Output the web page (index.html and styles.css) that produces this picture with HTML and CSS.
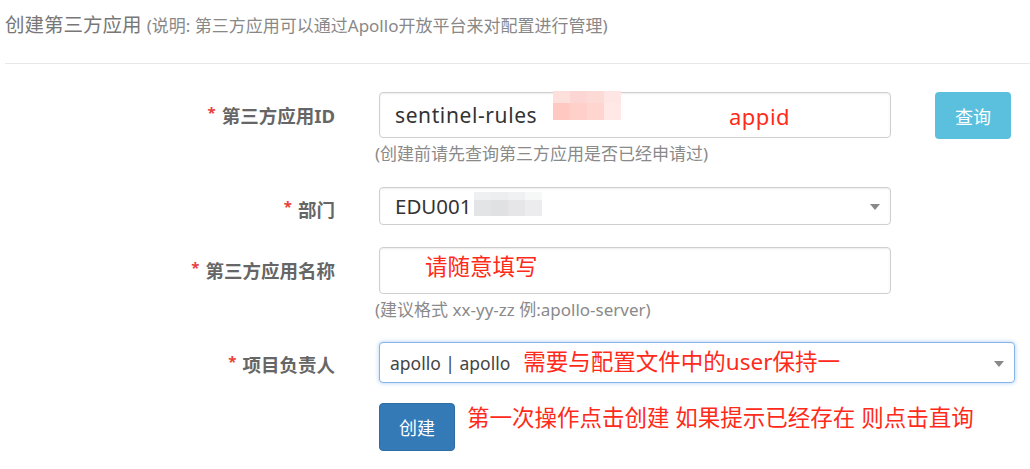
FILE: index.html
```html
<!DOCTYPE html>
<html lang="zh-CN">
<head>
<meta charset="utf-8">
<title>创建第三方应用</title>
<link rel="stylesheet" href="styles.css">
</head>
<body>
<div class="header">
  <span class="title">创建第三方应用</span>
  <span class="subtitle">(说明: 第三方应用可以通过Apollo开放平台来对配置进行管理)</span>
</div>
<div class="form">
  <div class="row row-id">
    <label class="label"><span class="req">*</span>第三方应用ID</label>
    <div class="field">
      <div class="control ctl-id">
        <span class="value value-id">sentinel-rules</span>
        <span class="mosaic mosaic-pink">
          <i class="m p1"></i><i class="m p2"></i><i class="m p3"></i><i class="m p4"></i>
          <i class="m p5"></i><i class="m p6"></i><i class="m p7"></i><i class="m p8"></i>
        </span>
        <span class="note note-appid">appid</span>
      </div>
      <div class="help">(创建前请先查询第三方应用是否已经申请过)</div>
    </div>
    <div class="aside"><button class="btn btn-info">查询</button></div>
  </div>

  <div class="row row-dept">
    <label class="label"><span class="req">*</span>部门</label>
    <div class="field">
      <div class="control select ctl-dept">
        <span class="value value-lg">EDU001</span>
        <span class="mosaic mosaic-gray">
          <i class="m g1"></i><i class="m g2"></i><i class="m g3"></i><i class="m g4"></i>
          <i class="m g5"></i><i class="m g6"></i><i class="m g7"></i><i class="m g8"></i>
        </span>
        <span class="caret"></span>
      </div>
    </div>
  </div>

  <div class="row row-name">
    <label class="label"><span class="req">*</span>第三方应用名称</label>
    <div class="field">
      <div class="control ctl-name">
        <span class="note note-name">请随意填写</span>
      </div>
      <div class="help">(建议格式 xx-yy-zz 例:apollo-server)</div>
    </div>
  </div>

  <div class="row row-owner">
    <label class="label"><span class="req">*</span>项目负责人</label>
    <div class="field field-wide">
      <div class="control select focus ctl-owner">
        <span class="value value-md">apollo | apollo</span>
        <span class="note note-owner">需要与配置文件中的user保持一</span>
        <span class="caret"></span>
      </div>
    </div>
  </div>

  <div class="row row-submit">
    <div class="label"></div>
    <div class="field field-wide submit">
      <button class="btn btn-primary">创建</button>
      <span class="note note-submit">第一次操作点击创建 如果提示已经存在 则点击直询</span>
    </div>
  </div>
</div>
</body>
</html>
```

FILE: styles.css
```css
* { box-sizing: border-box; }

body {
  margin: 0;
  background: #fff;
  font-family: "Noto Sans", "Noto Sans CJK SC", sans-serif;
  color: #555;
}

.header {
  margin-left: 5px;
  height: 64px;
  padding-top: 11px;
  border-bottom: 1px solid #e8e8e8;
  white-space: nowrap;
}

.title {
  font-size: 19.5px;
  color: #777;
  line-height: 28px;
}

.subtitle {
  font-size: 17px;
  color: #888;
  margin-left: 1px;
}

.form {
  display: flex;
  flex-direction: column;
  padding-top: 28px;
}

.row {
  display: grid;
  grid-template-columns: 335px 512px 80px;
  column-gap: 44px;
  align-items: start;
}

.row-dept { margin-top: 23px; }
.row-name { margin-top: 22px; }
.row-owner { margin-top: 22px; }
.row-submit { margin-top: 20px; }

.label {
  display: flex;
  justify-content: flex-end;
  align-items: center;
  font-weight: 700;
  font-size: 18.5px;
  color: #666;
  white-space: nowrap;
}

.row-id .label { height: 46px; }
.row-dept .label { height: 44px; margin-bottom: -6px; }
.row-name .label { height: 46px; }
.row-owner .label { height: 44px; margin-bottom: -3px; }

.req {
  color: #e8413c;
  font-size: 15px;
  margin-right: 6px;
  position: relative;
  top: -3px;
}

.field { display: flex; flex-direction: column; }
.field-wide { grid-column: 2 / 4; }

.control {
  position: relative;
  display: flex;
  align-items: center;
  border: 1px solid #cfcfcf;
  border-radius: 4px;
  box-shadow: inset 0 1px 2px rgba(0, 0, 0, 0.08);
  background: #fff;
  white-space: nowrap;
}

.ctl-id { height: 46px; padding-left: 15px; }
.ctl-dept { height: 38px; padding-left: 15px; }
.ctl-name { height: 47px; }
.ctl-owner { height: 41px; padding-left: 10px; }

.control.focus {
  border-color: #86b3ec;
  box-shadow: 0 0 4px rgba(102, 160, 233, 0.55);
}

.value { color: #333; }
.value-id { font-size: 21px; letter-spacing: 0.6px; }
.value-lg { font-size: 20.5px; }
.value-md { font-size: 17.5px; color: #444; }

.mosaic {
  display: grid;
  grid-template-columns: repeat(4, 17px);
  grid-template-rows: 12px 17px;
  align-self: flex-start;
}

.mosaic-pink { margin-top: -2px; margin-left: 16px; }
.mosaic-gray { margin-top: 4px; margin-left: 2px; grid-template-rows: 8px 16px; }

.m { display: block; }
.p1 { background: #fde0dc; }
.p2 { background: #fbd6d2; }
.p3 { background: #fcdad6; }
.p4 { background: #fde6e3; }
.p5 { background: #ffc8c0; }
.p6 { background: #ffd0ca; }
.p7 { background: #ffd5cf; }
.p8 { background: #ffe8e5; }
.g1 { background: #eef0f1; }
.g2 { background: #eceeef; }
.g3 { background: #f0f1f2; }
.g4 { background: #f6f7f7; }
.g5 { background: #e2e4e6; }
.g6 { background: #dfe1e3; }
.g7 { background: #e6e6e8; }
.g8 { background: #ececee; }

.note {
  color: #ff2a1a;
  white-space: nowrap;
}

.note-appid {
  position: absolute;
  left: 349px;
  top: 8px;
  font-size: 22px;
  letter-spacing: 0.5px;
}

.note-name {
  position: absolute;
  left: 45px;
  top: 1px;
  font-size: 22.5px;
}

.note-owner {
  font-size: 22.5px;
  margin-left: 13px;
  position: relative;
  top: -2px;
}

.caret {
  position: absolute;
  right: 10px;
  top: 50%;
  margin-top: -2px;
  width: 0;
  height: 0;
  border-left: 5px solid transparent;
  border-right: 5px solid transparent;
  border-top: 6px solid #888;
}

.help {
  margin-top: 6px;
  margin-left: -4px;
  font-size: 17px;
  line-height: 20px;
  color: #8a8a8a;
  white-space: nowrap;
}

.btn {
  border: none;
  border-radius: 4px;
  color: #fff;
  font-family: "Noto Sans CJK SC", sans-serif;
  font-size: 18px;
  cursor: pointer;
}

.btn-info {
  width: 76px;
  height: 47px;
  background: #5bc0de;
}

.btn-primary {
  width: 76px;
  height: 48px;
  background: #337ab7;
  border: 1px solid #2e6da4;
}

.submit {
  flex-direction: row;
  align-items: flex-start;
}

.note-submit {
  font-size: 22.5px;
  margin-left: 12px;
  margin-top: -3px;
}
```
